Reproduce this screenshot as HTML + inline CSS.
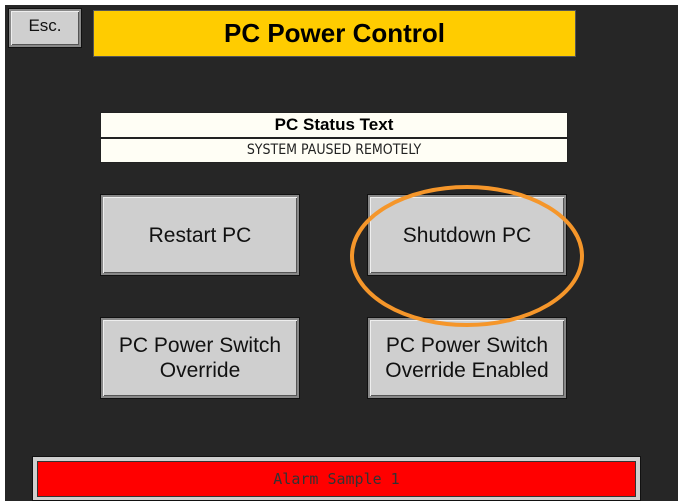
<!DOCTYPE html>
<html><head><style>
body{margin:0;width:678px;height:501px;background:#fff;position:relative;overflow:hidden;font-family:"Liberation Sans",sans-serif}
.bg{position:absolute;left:5px;top:5px;width:673px;height:496px;background:#262626}
.a{position:absolute;box-sizing:border-box}
.btn{background:#cfcfcf;border:2px solid #888;box-shadow:0 0 0 1px #111, inset 1px 1px 0 #eee, inset -1px -1px 0 #555;display:flex;align-items:center;justify-content:center;text-align:center;font-size:21px;color:#111;line-height:25px}
</style></head><body>
<div class="bg"></div>
<div class="a btn" style="left:9px;top:9px;width:72px;height:38px;font-size:17px;padding-bottom:6px">Esc.</div>
<div class="a" style="left:93px;top:10px;width:483px;height:47px;background:#ffcc00;border:1px solid #555;display:flex;align-items:center;justify-content:center;font-weight:bold;font-size:26px;color:#000">PC Power Control</div>
<div class="a" style="left:100px;top:112px;width:468px;height:51px;background:#fffef5;border:1px solid #222">
<div style="height:24px;border-bottom:2px solid #222;text-align:center;font-weight:bold;font-size:17px;line-height:24px">PC Status Text</div>
<div style="text-align:center;font-size:14px;line-height:22px;font-family:'DejaVu Sans Condensed',sans-serif;color:#222">SYSTEM PAUSED REMOTELY</div>
</div>
<div class="a btn" style="left:101px;top:195px;width:198px;height:80px">Restart PC</div>
<div class="a btn" style="left:368px;top:195px;width:198px;height:80px">Shutdown PC</div>
<div class="a btn" style="left:101px;top:318px;width:198px;height:80px">PC Power Switch<br>Override</div>
<div class="a btn" style="left:368px;top:318px;width:198px;height:80px">PC Power Switch<br>Override Enabled</div>
<svg class="a" style="left:0;top:0" width="678" height="501"><ellipse cx="467" cy="256" rx="115" ry="69" fill="none" stroke="#f5962a" stroke-width="4"/></svg>
<div class="a" style="left:32px;top:456px;width:609px;height:45px;background:#cfcfcf;border:1px solid #111;padding:4px"><div style="background:#ff0000;border:1px solid #333;height:34px;text-align:center;line-height:34px;font-size:15px;color:#333;font-family:'DejaVu Sans Mono',monospace">Alarm Sample 1</div></div>
</body></html>
